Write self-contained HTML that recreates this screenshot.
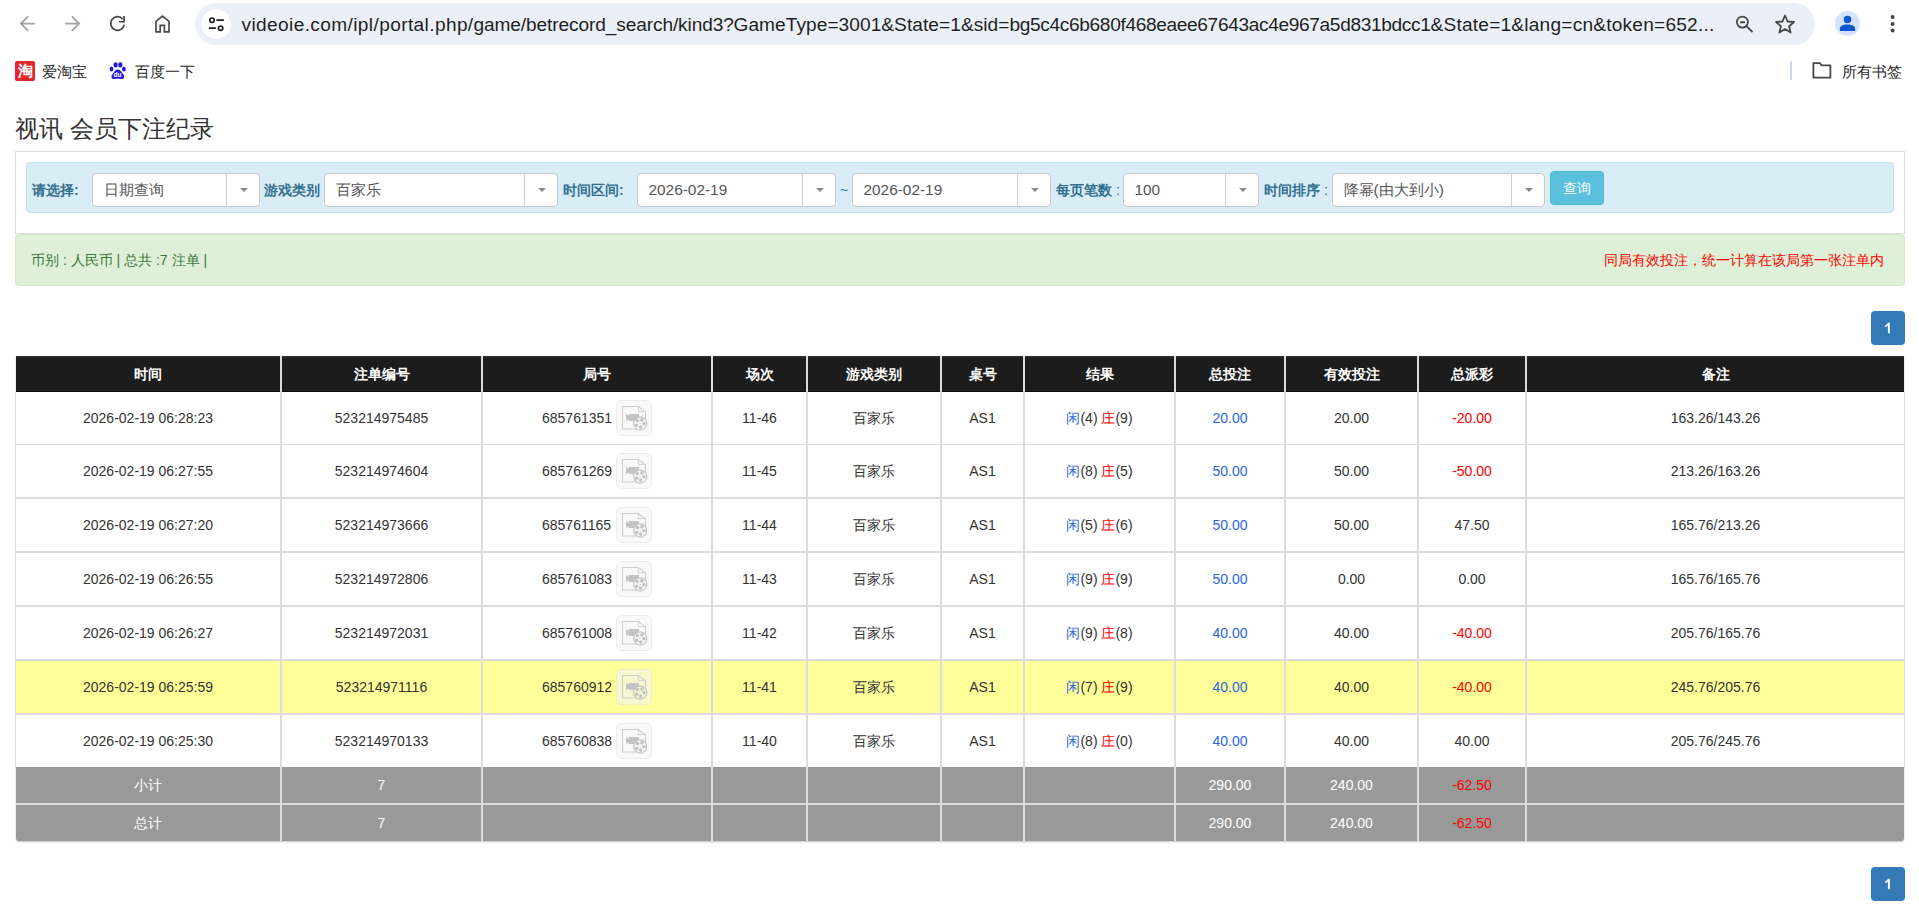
<!DOCTYPE html><html><head><meta charset="utf-8"><title>betrecord</title><style>
*{box-sizing:border-box;margin:0;padding:0}
html,body{width:1919px;height:920px;overflow:hidden;background:#fff;font-family:"Liberation Sans",sans-serif;color:#333}
.ab{position:absolute}
.nw{white-space:nowrap}
.sel{position:absolute;top:173px;height:34px;background:#fff;border:1px solid #c8c8c8;border-radius:4px}
.sel .dv{position:absolute;top:0;bottom:0;width:1px;background:#cfcfcf}
.sel .car{position:absolute;top:14px;width:0;height:0;border-left:4px solid transparent;border-right:4px solid transparent;border-top:4.5px solid #888}
.sel .tx{position:absolute;left:10.5px;top:0;line-height:32px;font-size:15.4px;color:#555;white-space:nowrap}
.lbl{position:absolute;top:180px;line-height:20px;font-size:14px;font-weight:bold;color:#31708f;white-space:nowrap}
.cell{position:absolute;text-align:center;white-space:nowrap;font-size:14px}
.hdr{color:#fff;font-weight:bold}
.vl{position:absolute;width:2px;background:#dcdcdc}
.hl{position:absolute;height:1px;background:#dcdcdc}
.bl{color:#2a66e0}
.rd{color:#f00}
.pg{position:absolute;left:1871px;width:34px;height:34px;background:#337ab7;border-radius:4px;color:#fff;font-size:14px;line-height:34px;text-align:center}

</style></head><body>
<div class="ab" style="left:0;top:0;width:1919px;height:48px;background:#fff"></div>
<svg class="ab" style="left:18px;top:14px" width="20" height="20" viewBox="0 0 20 20"><path d="M16.8 9.6H3.4M10.1 2.4L2.9 9.6l7.2 7.2" fill="none" stroke="#a3a3a3" stroke-width="1.85"/></svg>
<svg class="ab" style="left:62px;top:14px" width="20" height="20" viewBox="0 0 20 20"><path d="M3 9.6h13.4M9.9 2.4l7.2 7.2-7.2 7.2" fill="none" stroke="#a3a3a3" stroke-width="1.85"/></svg>
<svg class="ab" style="left:108px;top:14px" width="20" height="20" viewBox="0 0 20 20"><path d="M16.2 10.68A6.8 6.8 0 1 1 14.6 5" fill="none" stroke="#474747" stroke-width="1.7"/><path d="M16.05 1.9V7.75H10.96" fill="none" stroke="#474747" stroke-width="1.7"/></svg>
<svg class="ab" style="left:152px;top:13px" width="22" height="22" viewBox="0 0 22 22"><path d="M4 18.8V8.3L10.5 3L17 8.3V18.8H12.4V12.3H8.2V18.8Z" fill="none" stroke="#474747" stroke-width="1.65" stroke-linejoin="miter"/></svg>
<div class="ab" style="left:195px;top:3px;width:1620px;height:42px;border-radius:21px;background:#ebeff7"></div>
<div class="ab" style="left:201px;top:9px;width:30px;height:30px;border-radius:15px;background:#fff"></div>
<svg class="ab" style="left:201px;top:9px" width="30" height="30" viewBox="0 0 30 30"><circle cx="11" cy="11.2" r="2.2" fill="none" stroke="#1f1f1f" stroke-width="1.7"/><path d="M15.4 11.2h7.5M7.8 19.2h7.1" stroke="#1f1f1f" stroke-width="1.8"/><circle cx="19.6" cy="19.2" r="2.2" fill="none" stroke="#1f1f1f" stroke-width="1.7"/></svg>
<div class="ab nw" style="left:241.5px;top:12.5px;font-size:19.1px;line-height:24px;letter-spacing:0.379px;color:#1f1f1f">videoie.com/ipl/portal.php/</div>
<div class="ab nw" style="left:473.5px;top:12.5px;font-size:19.1px;line-height:24px;letter-spacing:-0.107px;color:#1f1f1f">game/betrecord_search/kind3?</div>
<div class="ab nw" style="left:733.5px;top:12.5px;font-size:19.1px;line-height:24px;letter-spacing:0.061px;color:#1f1f1f">GameType=3001&amp;State=1&amp;sid=</div>
<div class="ab nw" style="left:1009.5px;top:12.5px;font-size:19.1px;line-height:24px;letter-spacing:-0.341px;color:#1f1f1f">bg5c4c6b680f468eaee67643ac4e967a5d831bdcc1</div>
<div class="ab nw" style="left:1430.5px;top:12.5px;font-size:19.1px;line-height:24px;letter-spacing:0.220px;color:#1f1f1f">&amp;State=1&amp;lang=cn&amp;token=652...</div>
<svg class="ab" style="left:1733px;top:13px" width="24" height="24" viewBox="0 0 24 24"><circle cx="9.4" cy="9.1" r="5.5" fill="none" stroke="#474747" stroke-width="1.8"/><path d="M7.1 9.2h4.9M13.5 13.2l6 6" stroke="#474747" stroke-width="1.9"/></svg>
<svg class="ab" style="left:1773px;top:12px" width="24" height="24" viewBox="0 0 24 24"><path d="M12 3.5l2.6 6 6.4.5-4.9 4.2 1.5 6.3L12 17.1l-5.6 3.4 1.5-6.3L3 10l6.4-.5z" fill="none" stroke="#474747" stroke-width="1.8" stroke-linejoin="round"/></svg>
<div class="ab" style="left:1835px;top:11px;width:25px;height:25px;border-radius:50%;background:#d3e3fd"></div>
<svg class="ab" style="left:1835px;top:11px" width="25" height="25" viewBox="0 0 25 25"><circle cx="12.5" cy="8.5" r="3.75" fill="#0b57d0"/><path d="M4.9 20V17.6C4.9 15.1 8.2 13.6 12.5 13.6S20.1 15.1 20.1 17.6V20Z" fill="#0b57d0"/></svg>
<svg class="ab" style="left:1886px;top:12px" width="14" height="24" viewBox="0 0 14 24"><circle cx="6.6" cy="5" r="2" fill="#474747"/><circle cx="6.6" cy="12" r="2" fill="#474747"/><circle cx="6.6" cy="18.6" r="2" fill="#474747"/></svg>
<div class="ab" style="left:15px;top:61px;width:20px;height:20px;border-radius:2px;background:#e2262b"></div>
<div class="ab nw" style="left:15px;top:61px;width:20px;height:20px;line-height:20px;text-align:center;font-size:15px;font-weight:bold;color:#fff">淘</div>
<div class="ab nw" style="left:42px;top:62px;font-size:15px;line-height:20px;color:#1f1f1f">爱淘宝</div>
<svg class="ab" style="left:109px;top:61px" width="18" height="20" viewBox="0 0 18 20"><ellipse cx="2.5" cy="8.1" rx="1.9" ry="2.5" fill="#2319dc"/><ellipse cx="6.6" cy="3.9" rx="2.1" ry="2.7" fill="#2319dc"/><ellipse cx="11.3" cy="3.9" rx="2.1" ry="2.7" fill="#2319dc"/><ellipse cx="14.9" cy="8.1" rx="1.9" ry="2.5" fill="#2319dc"/><path d="M8.8 8.4c-2.2 0-3.3 2.2-4.9 4-1.8 2-2 4.6-.3 5.3 1.4.6 3.5.1 5.2.1s3.8.5 5.2-.1c1.7-.7 1.5-3.3-.3-5.3-1.6-1.8-2.7-4-4.9-4z" fill="#2319dc"/><text x="8.6" y="16.4" font-size="6.6" font-weight="bold" text-anchor="middle" fill="#fff" font-family="Liberation Sans">du</text></svg>
<div class="ab nw" style="left:135px;top:62px;font-size:15px;line-height:20px;color:#1f1f1f">百度一下</div>
<div class="ab" style="left:1790px;top:61px;width:2px;height:19px;border-radius:1px;background:#c7d8f7"></div>
<svg class="ab" style="left:1811px;top:61px" width="22" height="19" viewBox="0 0 22 19"><path d="M2.4 2.1h6.4l2 2.2h8.6v12.4H2.4z" fill="none" stroke="#474747" stroke-width="1.8" stroke-linejoin="round"/></svg>
<div class="ab nw" style="left:1842px;top:62px;font-size:15px;line-height:20px;color:#1f1f1f">所有书签</div>
<div class="ab nw" style="left:15px;top:113px;font-size:24px;line-height:32px;color:#333">视讯 会员下注纪录</div>
<div class="ab" style="left:15px;top:151px;width:1890px;height:83px;border:1px solid #ddd;background:#fff"></div>
<div class="ab" style="left:26px;top:162px;width:1868px;height:51px;border:1px solid #bce8f1;border-radius:4px;background:#d9edf7"></div>
<div class="lbl" style="left:32px">请选择:</div>
<div class="lbl" style="left:264px">游戏类别</div>
<div class="lbl" style="left:563px">时间区间:</div>
<div class="lbl" style="left:1056px">每页笔数<span style="font-weight:normal"> :</span></div>
<div class="lbl" style="left:1264px">时间排序<span style="font-weight:normal"> :</span></div>
<div class="ab nw" style="left:840px;top:180px;font-size:14px;line-height:20px;color:#31708f">~</div>
<div class="sel" style="left:92px;width:168px"><div class="tx">日期查询</div><div class="dv" style="left:133px"></div><div class="car" style="left:146.8px"></div></div>
<div class="sel" style="left:324px;width:234px"><div class="tx">百家乐</div><div class="dv" style="left:199px"></div><div class="car" style="left:212.8px"></div></div>
<div class="sel" style="left:637px;width:199px"><div class="tx">2026-02-19</div><div class="dv" style="left:164px"></div><div class="car" style="left:177.8px"></div></div>
<div class="sel" style="left:852px;width:199px"><div class="tx">2026-02-19</div><div class="dv" style="left:164px"></div><div class="car" style="left:177.8px"></div></div>
<div class="sel" style="left:1123px;width:136px"><div class="tx">100</div><div class="dv" style="left:101px"></div><div class="car" style="left:114.8px"></div></div>
<div class="sel" style="left:1332px;width:213px"><div class="tx">降幂(由大到小)</div><div class="dv" style="left:178px"></div><div class="car" style="left:191.8px"></div></div>
<div class="ab" style="left:1550px;top:171px;width:54px;height:34px;border:1px solid #46b8da;border-radius:4px;background:#5bc0de;color:#fff;font-size:14px;line-height:32px;text-align:center">查询</div>
<div class="ab" style="left:15px;top:234px;width:1890px;height:52px;border:1px solid #d6e9c6;border-radius:4px;background:#dff0d8"></div>
<div class="ab nw" style="left:31px;top:250px;font-size:14px;line-height:20px;color:#3c763d">币别 : 人民币 | 总共 :7 注单 |</div>
<div class="ab nw" style="left:1604px;top:250px;font-size:14px;line-height:20px;color:#f00">同局有效投注，统一计算在该局第一张注单内</div>
<div class="pg" style="top:311px"><svg width="34" height="34" viewBox="0 0 34 34" style="position:absolute;left:0;top:0"><path d="M16.9 11.8h1.9v10.4h-1.9v-7.6c-.8.7-1.7 1.2-2.8 1.6v-1.8c1.3-.5 2.3-1.4 2.8-2.6z" fill="#fff"/></svg></div>
<div class="pg" style="top:867px"><svg width="34" height="34" viewBox="0 0 34 34" style="position:absolute;left:0;top:0"><path d="M16.9 11.8h1.9v10.4h-1.9v-7.6c-.8.7-1.7 1.2-2.8 1.6v-1.8c1.3-.5 2.3-1.4 2.8-2.6z" fill="#fff"/></svg></div>
<div class="ab" style="left:16px;top:356px;width:1888px;height:485px;border-radius:0 0 3px 3px;box-shadow:0 1px 2px rgba(0,0,0,.25)"></div>
<div class="ab" style="left:16px;top:356px;width:1888px;height:36px;background:#1c1c1c;border-top:2px solid #2a2a2a;border-bottom:1px solid #0e0e0e"></div>
<div class="cell hdr" style="left:16px;width:264px;top:356px;line-height:36px">时间</div>
<div class="cell hdr" style="left:282px;width:199px;top:356px;line-height:36px">注单编号</div>
<div class="cell hdr" style="left:483px;width:228px;top:356px;line-height:36px">局号</div>
<div class="cell hdr" style="left:713px;width:93px;top:356px;line-height:36px">场次</div>
<div class="cell hdr" style="left:808px;width:132px;top:356px;line-height:36px">游戏类别</div>
<div class="cell hdr" style="left:942px;width:81px;top:356px;line-height:36px">桌号</div>
<div class="cell hdr" style="left:1025px;width:149px;top:356px;line-height:36px">结果</div>
<div class="cell hdr" style="left:1176px;width:108px;top:356px;line-height:36px">总投注</div>
<div class="cell hdr" style="left:1286px;width:131px;top:356px;line-height:36px">有效投注</div>
<div class="cell hdr" style="left:1419px;width:106px;top:356px;line-height:36px">总派彩</div>
<div class="cell hdr" style="left:1527px;width:377px;top:356px;line-height:36px">备注</div>
<div class="ab" style="left:16px;top:392px;width:1888px;height:52px;background:#fff"></div>
<div class="cell" style="left:16px;width:264px;top:392px;line-height:52px">2026-02-19 06:28:23</div>
<div class="cell" style="left:282px;width:199px;top:392px;line-height:52px">523214975485</div>
<div class="ab nw" style="left:542px;top:392px;line-height:52px;font-size:14px">685761351</div>
<div class="ab" style="left:616px;top:400px;width:36px;height:36px"><svg width="36" height="36" viewBox="0 0 36 36" style="position:absolute;left:0;top:0"><rect x="0.5" y="0.5" width="35" height="35" rx="4.5" fill="#f9f9f9" stroke="#ececec"/><path d="M24 29H6.5V6.5h15.8l7.2 5.2V24" fill="none" stroke="#cdcdcd" stroke-width="1.1"/><path d="M22.3 6.5v5.2h7.2" fill="none" stroke="#d2d2d2" stroke-width="1"/><path d="M12.7 13.9h10.3v7.2H12.7zM10.1 14.1l2.8 2v3l-2.8 2z" fill="#c3c3c3"/><circle cx="24.2" cy="23.5" r="6.6" fill="#f9f9f9" stroke="#c6c6c6" stroke-width="1.2"/><circle cx="21.4" cy="20.6" r="1.8" fill="#c3c3c3"/><circle cx="25.9" cy="19.9" r="1.8" fill="#c3c3c3"/><circle cx="28" cy="23.8" r="1.8" fill="#c3c3c3"/><circle cx="24.6" cy="27.1" r="1.8" fill="#c3c3c3"/><circle cx="20.6" cy="25.2" r="1.8" fill="#c3c3c3"/><circle cx="24" cy="23.3" r="0.6" fill="#c3c3c3"/></svg></div>
<div class="cell" style="left:713px;width:93px;top:392px;line-height:52px">11-46</div>
<div class="cell" style="left:808px;width:132px;top:392px;line-height:52px">百家乐</div>
<div class="cell" style="left:942px;width:81px;top:392px;line-height:52px">AS1</div>
<div class="cell" style="left:1025px;width:149px;top:392px;line-height:52px"><span class="bl">闲</span>(4) <span class="rd">庄</span>(9)</div>
<div class="cell" style="left:1176px;width:108px;top:392px;line-height:52px"><span class="bl">20.00</span></div>
<div class="cell" style="left:1286px;width:131px;top:392px;line-height:52px">20.00</div>
<div class="cell" style="left:1419px;width:106px;top:392px;line-height:52px"><span class="rd">-20.00</span></div>
<div class="cell" style="left:1527px;width:377px;top:392px;line-height:52px">163.26/143.26</div>
<div class="ab" style="left:16px;top:444px;width:1888px;height:54px;background:#fff"></div>
<div class="cell" style="left:16px;width:264px;top:444px;line-height:54px">2026-02-19 06:27:55</div>
<div class="cell" style="left:282px;width:199px;top:444px;line-height:54px">523214974604</div>
<div class="ab nw" style="left:542px;top:444px;line-height:54px;font-size:14px">685761269</div>
<div class="ab" style="left:616px;top:453px;width:36px;height:36px"><svg width="36" height="36" viewBox="0 0 36 36" style="position:absolute;left:0;top:0"><rect x="0.5" y="0.5" width="35" height="35" rx="4.5" fill="#f9f9f9" stroke="#ececec"/><path d="M24 29H6.5V6.5h15.8l7.2 5.2V24" fill="none" stroke="#cdcdcd" stroke-width="1.1"/><path d="M22.3 6.5v5.2h7.2" fill="none" stroke="#d2d2d2" stroke-width="1"/><path d="M12.7 13.9h10.3v7.2H12.7zM10.1 14.1l2.8 2v3l-2.8 2z" fill="#c3c3c3"/><circle cx="24.2" cy="23.5" r="6.6" fill="#f9f9f9" stroke="#c6c6c6" stroke-width="1.2"/><circle cx="21.4" cy="20.6" r="1.8" fill="#c3c3c3"/><circle cx="25.9" cy="19.9" r="1.8" fill="#c3c3c3"/><circle cx="28" cy="23.8" r="1.8" fill="#c3c3c3"/><circle cx="24.6" cy="27.1" r="1.8" fill="#c3c3c3"/><circle cx="20.6" cy="25.2" r="1.8" fill="#c3c3c3"/><circle cx="24" cy="23.3" r="0.6" fill="#c3c3c3"/></svg></div>
<div class="cell" style="left:713px;width:93px;top:444px;line-height:54px">11-45</div>
<div class="cell" style="left:808px;width:132px;top:444px;line-height:54px">百家乐</div>
<div class="cell" style="left:942px;width:81px;top:444px;line-height:54px">AS1</div>
<div class="cell" style="left:1025px;width:149px;top:444px;line-height:54px"><span class="bl">闲</span>(8) <span class="rd">庄</span>(5)</div>
<div class="cell" style="left:1176px;width:108px;top:444px;line-height:54px"><span class="bl">50.00</span></div>
<div class="cell" style="left:1286px;width:131px;top:444px;line-height:54px">50.00</div>
<div class="cell" style="left:1419px;width:106px;top:444px;line-height:54px"><span class="rd">-50.00</span></div>
<div class="cell" style="left:1527px;width:377px;top:444px;line-height:54px">213.26/163.26</div>
<div class="ab" style="left:16px;top:498px;width:1888px;height:54px;background:#fff"></div>
<div class="cell" style="left:16px;width:264px;top:498px;line-height:54px">2026-02-19 06:27:20</div>
<div class="cell" style="left:282px;width:199px;top:498px;line-height:54px">523214973666</div>
<div class="ab nw" style="left:542px;top:498px;line-height:54px;font-size:14px">685761165</div>
<div class="ab" style="left:616px;top:507px;width:36px;height:36px"><svg width="36" height="36" viewBox="0 0 36 36" style="position:absolute;left:0;top:0"><rect x="0.5" y="0.5" width="35" height="35" rx="4.5" fill="#f9f9f9" stroke="#ececec"/><path d="M24 29H6.5V6.5h15.8l7.2 5.2V24" fill="none" stroke="#cdcdcd" stroke-width="1.1"/><path d="M22.3 6.5v5.2h7.2" fill="none" stroke="#d2d2d2" stroke-width="1"/><path d="M12.7 13.9h10.3v7.2H12.7zM10.1 14.1l2.8 2v3l-2.8 2z" fill="#c3c3c3"/><circle cx="24.2" cy="23.5" r="6.6" fill="#f9f9f9" stroke="#c6c6c6" stroke-width="1.2"/><circle cx="21.4" cy="20.6" r="1.8" fill="#c3c3c3"/><circle cx="25.9" cy="19.9" r="1.8" fill="#c3c3c3"/><circle cx="28" cy="23.8" r="1.8" fill="#c3c3c3"/><circle cx="24.6" cy="27.1" r="1.8" fill="#c3c3c3"/><circle cx="20.6" cy="25.2" r="1.8" fill="#c3c3c3"/><circle cx="24" cy="23.3" r="0.6" fill="#c3c3c3"/></svg></div>
<div class="cell" style="left:713px;width:93px;top:498px;line-height:54px">11-44</div>
<div class="cell" style="left:808px;width:132px;top:498px;line-height:54px">百家乐</div>
<div class="cell" style="left:942px;width:81px;top:498px;line-height:54px">AS1</div>
<div class="cell" style="left:1025px;width:149px;top:498px;line-height:54px"><span class="bl">闲</span>(5) <span class="rd">庄</span>(6)</div>
<div class="cell" style="left:1176px;width:108px;top:498px;line-height:54px"><span class="bl">50.00</span></div>
<div class="cell" style="left:1286px;width:131px;top:498px;line-height:54px">50.00</div>
<div class="cell" style="left:1419px;width:106px;top:498px;line-height:54px">47.50</div>
<div class="cell" style="left:1527px;width:377px;top:498px;line-height:54px">165.76/213.26</div>
<div class="ab" style="left:16px;top:552px;width:1888px;height:54px;background:#fff"></div>
<div class="cell" style="left:16px;width:264px;top:552px;line-height:54px">2026-02-19 06:26:55</div>
<div class="cell" style="left:282px;width:199px;top:552px;line-height:54px">523214972806</div>
<div class="ab nw" style="left:542px;top:552px;line-height:54px;font-size:14px">685761083</div>
<div class="ab" style="left:616px;top:561px;width:36px;height:36px"><svg width="36" height="36" viewBox="0 0 36 36" style="position:absolute;left:0;top:0"><rect x="0.5" y="0.5" width="35" height="35" rx="4.5" fill="#f9f9f9" stroke="#ececec"/><path d="M24 29H6.5V6.5h15.8l7.2 5.2V24" fill="none" stroke="#cdcdcd" stroke-width="1.1"/><path d="M22.3 6.5v5.2h7.2" fill="none" stroke="#d2d2d2" stroke-width="1"/><path d="M12.7 13.9h10.3v7.2H12.7zM10.1 14.1l2.8 2v3l-2.8 2z" fill="#c3c3c3"/><circle cx="24.2" cy="23.5" r="6.6" fill="#f9f9f9" stroke="#c6c6c6" stroke-width="1.2"/><circle cx="21.4" cy="20.6" r="1.8" fill="#c3c3c3"/><circle cx="25.9" cy="19.9" r="1.8" fill="#c3c3c3"/><circle cx="28" cy="23.8" r="1.8" fill="#c3c3c3"/><circle cx="24.6" cy="27.1" r="1.8" fill="#c3c3c3"/><circle cx="20.6" cy="25.2" r="1.8" fill="#c3c3c3"/><circle cx="24" cy="23.3" r="0.6" fill="#c3c3c3"/></svg></div>
<div class="cell" style="left:713px;width:93px;top:552px;line-height:54px">11-43</div>
<div class="cell" style="left:808px;width:132px;top:552px;line-height:54px">百家乐</div>
<div class="cell" style="left:942px;width:81px;top:552px;line-height:54px">AS1</div>
<div class="cell" style="left:1025px;width:149px;top:552px;line-height:54px"><span class="bl">闲</span>(9) <span class="rd">庄</span>(9)</div>
<div class="cell" style="left:1176px;width:108px;top:552px;line-height:54px"><span class="bl">50.00</span></div>
<div class="cell" style="left:1286px;width:131px;top:552px;line-height:54px">0.00</div>
<div class="cell" style="left:1419px;width:106px;top:552px;line-height:54px">0.00</div>
<div class="cell" style="left:1527px;width:377px;top:552px;line-height:54px">165.76/165.76</div>
<div class="ab" style="left:16px;top:606px;width:1888px;height:54px;background:#fff"></div>
<div class="cell" style="left:16px;width:264px;top:606px;line-height:54px">2026-02-19 06:26:27</div>
<div class="cell" style="left:282px;width:199px;top:606px;line-height:54px">523214972031</div>
<div class="ab nw" style="left:542px;top:606px;line-height:54px;font-size:14px">685761008</div>
<div class="ab" style="left:616px;top:615px;width:36px;height:36px"><svg width="36" height="36" viewBox="0 0 36 36" style="position:absolute;left:0;top:0"><rect x="0.5" y="0.5" width="35" height="35" rx="4.5" fill="#f9f9f9" stroke="#ececec"/><path d="M24 29H6.5V6.5h15.8l7.2 5.2V24" fill="none" stroke="#cdcdcd" stroke-width="1.1"/><path d="M22.3 6.5v5.2h7.2" fill="none" stroke="#d2d2d2" stroke-width="1"/><path d="M12.7 13.9h10.3v7.2H12.7zM10.1 14.1l2.8 2v3l-2.8 2z" fill="#c3c3c3"/><circle cx="24.2" cy="23.5" r="6.6" fill="#f9f9f9" stroke="#c6c6c6" stroke-width="1.2"/><circle cx="21.4" cy="20.6" r="1.8" fill="#c3c3c3"/><circle cx="25.9" cy="19.9" r="1.8" fill="#c3c3c3"/><circle cx="28" cy="23.8" r="1.8" fill="#c3c3c3"/><circle cx="24.6" cy="27.1" r="1.8" fill="#c3c3c3"/><circle cx="20.6" cy="25.2" r="1.8" fill="#c3c3c3"/><circle cx="24" cy="23.3" r="0.6" fill="#c3c3c3"/></svg></div>
<div class="cell" style="left:713px;width:93px;top:606px;line-height:54px">11-42</div>
<div class="cell" style="left:808px;width:132px;top:606px;line-height:54px">百家乐</div>
<div class="cell" style="left:942px;width:81px;top:606px;line-height:54px">AS1</div>
<div class="cell" style="left:1025px;width:149px;top:606px;line-height:54px"><span class="bl">闲</span>(9) <span class="rd">庄</span>(8)</div>
<div class="cell" style="left:1176px;width:108px;top:606px;line-height:54px"><span class="bl">40.00</span></div>
<div class="cell" style="left:1286px;width:131px;top:606px;line-height:54px">40.00</div>
<div class="cell" style="left:1419px;width:106px;top:606px;line-height:54px"><span class="rd">-40.00</span></div>
<div class="cell" style="left:1527px;width:377px;top:606px;line-height:54px">205.76/165.76</div>
<div class="ab" style="left:16px;top:660px;width:1888px;height:54px;background:#ffff99"></div>
<div class="cell" style="left:16px;width:264px;top:660px;line-height:54px">2026-02-19 06:25:59</div>
<div class="cell" style="left:282px;width:199px;top:660px;line-height:54px">523214971116</div>
<div class="ab nw" style="left:542px;top:660px;line-height:54px;font-size:14px">685760912</div>
<div class="ab" style="left:616px;top:669px;width:36px;height:36px"><svg width="36" height="36" viewBox="0 0 36 36" style="position:absolute;left:0;top:0"><rect x="0.5" y="0.5" width="35" height="35" rx="4.5" fill="#f7f7d0" stroke="#ececc0"/><path d="M24 29H6.5V6.5h15.8l7.2 5.2V24" fill="none" stroke="#cdcdcd" stroke-width="1.1"/><path d="M22.3 6.5v5.2h7.2" fill="none" stroke="#d2d2d2" stroke-width="1"/><path d="M12.7 13.9h10.3v7.2H12.7zM10.1 14.1l2.8 2v3l-2.8 2z" fill="#c3c3c3"/><circle cx="24.2" cy="23.5" r="6.6" fill="#f7f7d0" stroke="#c6c6c6" stroke-width="1.2"/><circle cx="21.4" cy="20.6" r="1.8" fill="#c3c3c3"/><circle cx="25.9" cy="19.9" r="1.8" fill="#c3c3c3"/><circle cx="28" cy="23.8" r="1.8" fill="#c3c3c3"/><circle cx="24.6" cy="27.1" r="1.8" fill="#c3c3c3"/><circle cx="20.6" cy="25.2" r="1.8" fill="#c3c3c3"/><circle cx="24" cy="23.3" r="0.6" fill="#c3c3c3"/></svg></div>
<div class="cell" style="left:713px;width:93px;top:660px;line-height:54px">11-41</div>
<div class="cell" style="left:808px;width:132px;top:660px;line-height:54px">百家乐</div>
<div class="cell" style="left:942px;width:81px;top:660px;line-height:54px">AS1</div>
<div class="cell" style="left:1025px;width:149px;top:660px;line-height:54px"><span class="bl">闲</span>(7) <span class="rd">庄</span>(9)</div>
<div class="cell" style="left:1176px;width:108px;top:660px;line-height:54px"><span class="bl">40.00</span></div>
<div class="cell" style="left:1286px;width:131px;top:660px;line-height:54px">40.00</div>
<div class="cell" style="left:1419px;width:106px;top:660px;line-height:54px"><span class="rd">-40.00</span></div>
<div class="cell" style="left:1527px;width:377px;top:660px;line-height:54px">245.76/205.76</div>
<div class="ab" style="left:16px;top:714px;width:1888px;height:54px;background:#fff"></div>
<div class="cell" style="left:16px;width:264px;top:714px;line-height:54px">2026-02-19 06:25:30</div>
<div class="cell" style="left:282px;width:199px;top:714px;line-height:54px">523214970133</div>
<div class="ab nw" style="left:542px;top:714px;line-height:54px;font-size:14px">685760838</div>
<div class="ab" style="left:616px;top:723px;width:36px;height:36px"><svg width="36" height="36" viewBox="0 0 36 36" style="position:absolute;left:0;top:0"><rect x="0.5" y="0.5" width="35" height="35" rx="4.5" fill="#f9f9f9" stroke="#ececec"/><path d="M24 29H6.5V6.5h15.8l7.2 5.2V24" fill="none" stroke="#cdcdcd" stroke-width="1.1"/><path d="M22.3 6.5v5.2h7.2" fill="none" stroke="#d2d2d2" stroke-width="1"/><path d="M12.7 13.9h10.3v7.2H12.7zM10.1 14.1l2.8 2v3l-2.8 2z" fill="#c3c3c3"/><circle cx="24.2" cy="23.5" r="6.6" fill="#f9f9f9" stroke="#c6c6c6" stroke-width="1.2"/><circle cx="21.4" cy="20.6" r="1.8" fill="#c3c3c3"/><circle cx="25.9" cy="19.9" r="1.8" fill="#c3c3c3"/><circle cx="28" cy="23.8" r="1.8" fill="#c3c3c3"/><circle cx="24.6" cy="27.1" r="1.8" fill="#c3c3c3"/><circle cx="20.6" cy="25.2" r="1.8" fill="#c3c3c3"/><circle cx="24" cy="23.3" r="0.6" fill="#c3c3c3"/></svg></div>
<div class="cell" style="left:713px;width:93px;top:714px;line-height:54px">11-40</div>
<div class="cell" style="left:808px;width:132px;top:714px;line-height:54px">百家乐</div>
<div class="cell" style="left:942px;width:81px;top:714px;line-height:54px">AS1</div>
<div class="cell" style="left:1025px;width:149px;top:714px;line-height:54px"><span class="bl">闲</span>(8) <span class="rd">庄</span>(0)</div>
<div class="cell" style="left:1176px;width:108px;top:714px;line-height:54px"><span class="bl">40.00</span></div>
<div class="cell" style="left:1286px;width:131px;top:714px;line-height:54px">40.00</div>
<div class="cell" style="left:1419px;width:106px;top:714px;line-height:54px">40.00</div>
<div class="cell" style="left:1527px;width:377px;top:714px;line-height:54px">205.76/245.76</div>
<div class="ab" style="left:16px;top:767px;width:1888px;height:36px;background:#999;"></div>
<div class="cell" style="left:16px;width:264px;top:767px;line-height:36px;color:#fff">小计</div>
<div class="cell" style="left:282px;width:199px;top:767px;line-height:36px;color:#fff">7</div>
<div class="cell" style="left:1176px;width:108px;top:767px;line-height:36px;color:#fff">290.00</div>
<div class="cell" style="left:1286px;width:131px;top:767px;line-height:36px;color:#fff">240.00</div>
<div class="cell" style="left:1419px;width:106px;top:767px;line-height:36px;color:#fff"><span class="rd">-62.50</span></div>
<div class="ab" style="left:16px;top:805px;width:1888px;height:36px;background:#999;border-radius:0 0 3px 3px;"></div>
<div class="cell" style="left:16px;width:264px;top:805px;line-height:36px;color:#fff">总计</div>
<div class="cell" style="left:282px;width:199px;top:805px;line-height:36px;color:#fff">7</div>
<div class="cell" style="left:1176px;width:108px;top:805px;line-height:36px;color:#fff">290.00</div>
<div class="cell" style="left:1286px;width:131px;top:805px;line-height:36px;color:#fff">240.00</div>
<div class="cell" style="left:1419px;width:106px;top:805px;line-height:36px;color:#fff"><span class="rd">-62.50</span></div>
<div class="ab" style="left:16px;top:803px;width:1888px;height:2px;background:#dcdcdc"></div>
<div class="hl" style="left:15px;top:444px;width:1889px"></div>
<div class="hl" style="left:15px;top:497px;width:1889px;height:2px"></div>
<div class="hl" style="left:15px;top:551px;width:1889px;height:2px"></div>
<div class="hl" style="left:15px;top:605px;width:1889px;height:2px"></div>
<div class="hl" style="left:15px;top:659px;width:1889px;height:2px"></div>
<div class="hl" style="left:15px;top:713px;width:1889px;height:2px"></div>
<div class="vl" style="left:280px;top:356px;height:485px"></div>
<div class="vl" style="left:481px;top:356px;height:485px"></div>
<div class="vl" style="left:711px;top:356px;height:485px"></div>
<div class="vl" style="left:806px;top:356px;height:485px"></div>
<div class="vl" style="left:940px;top:356px;height:485px"></div>
<div class="vl" style="left:1023px;top:356px;height:485px"></div>
<div class="vl" style="left:1174px;top:356px;height:485px"></div>
<div class="vl" style="left:1284px;top:356px;height:485px"></div>
<div class="vl" style="left:1417px;top:356px;height:485px"></div>
<div class="vl" style="left:1525px;top:356px;height:485px"></div>
<div class="ab" style="left:15px;top:392px;width:1px;height:375px;background:#dcdcdc"></div>
<div class="ab" style="left:1904px;top:392px;width:1px;height:375px;background:#dcdcdc"></div>
</body></html>
